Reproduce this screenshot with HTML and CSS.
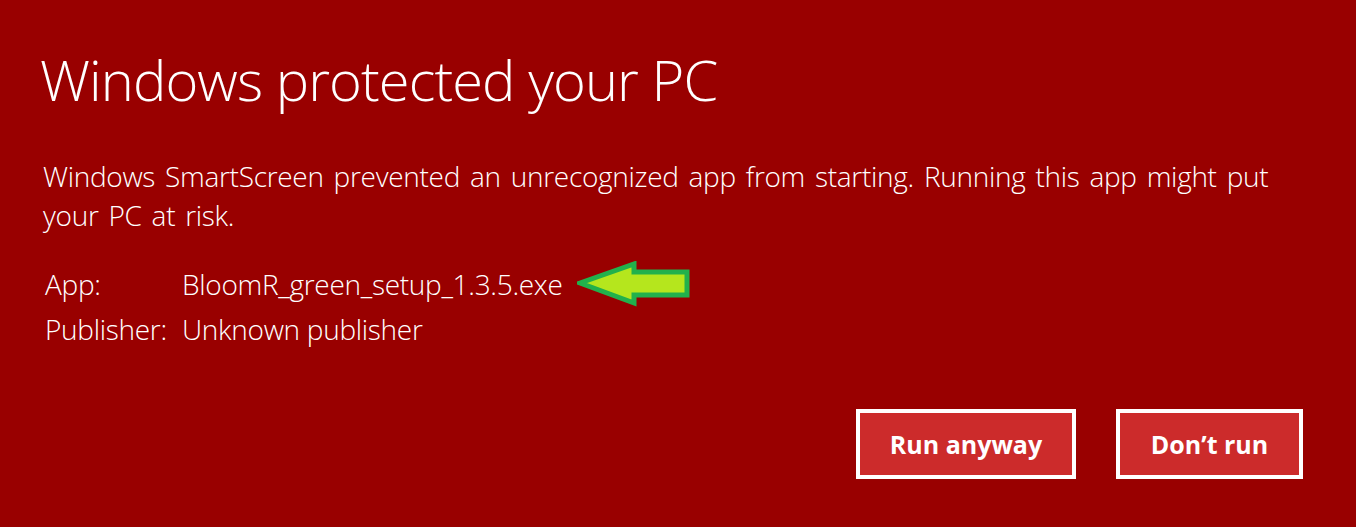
FILE: index.html
```html
<!DOCTYPE html>
<html lang="en">
<head>
<meta charset="utf-8">
<title>Windows protected your PC</title>
<link rel="stylesheet" href="styles.css">
</head>
<body>
<div class="dialog">
  <h1 class="title">Windows protected your PC</h1>
  <p class="message">Windows SmartScreen prevented an unrecognized app from starting. Running this app might put your PC at risk.</p>
  <div class="details">
    <div class="row">
      <span class="label">App:</span>
      <span class="value">BloomR_green_setup_1.3.5.exe</span>
      <svg class="arrow" width="114" height="46" viewBox="0 0 114 46">
        <polygon points="3,22 57,3 57,11 110,11 110,34 57,34 57,42" fill="#b5e61d" stroke="#22b14c" stroke-width="5" stroke-linejoin="miter"/>
      </svg>
    </div>
    <div class="row">
      <span class="label">Publisher:</span>
      <span class="value">Unknown publisher</span>
    </div>
  </div>
  <div class="actions">
    <button class="btn">Run anyway</button>
    <button class="btn">Don’t run</button>
  </div>
</div>
</body>
</html>
```
FILE: styles.css
```css
html, body {
  margin: 0;
  padding: 0;
  background: #990000;
}
body {
  width: 1356px;
  height: 527px;
  overflow: hidden;
  font-family: "Open Sans", "Segoe UI", sans-serif;
  color: #ffffff;
}
.dialog {
  padding: 34px 53px 0 40px;
  display: flex;
  flex-direction: column;
}
.title {
  margin: 0;
  font-weight: 300;
  font-size: 56px;
  line-height: 90px;
  letter-spacing: -0.9px;
}
.message {
  margin: 33px 0 0 3px;
  font-weight: 300;
  font-size: 28px;
  line-height: 39px;
  letter-spacing: -0.3px;
  word-spacing: 3px;
  max-width: 1240px;
}
.details {
  margin: 26px 0 0 5px;
  display: flex;
  flex-direction: column;
}
.row {
  display: flex;
  align-items: center;
  height: 45px;
  font-weight: 300;
  font-size: 28px;
  letter-spacing: -0.3px;
}
.label {
  width: 137px;
}
.arrow {
  margin-left: 14px;
}
.actions {
  margin-top: 58px;
  display: flex;
  justify-content: flex-end;
  gap: 40px;
}
.btn {
  background: #cc2b2b;
  border: 4px solid #ffffff;
  color: #ffffff;
  font-family: "Open Sans", "Segoe UI", sans-serif;
  font-weight: 700;
  font-size: 25px;
  height: 70px;
  padding: 0;
}
.btn:first-child {
  width: 220px;
}
.btn:last-child {
  width: 187px;
}
```
